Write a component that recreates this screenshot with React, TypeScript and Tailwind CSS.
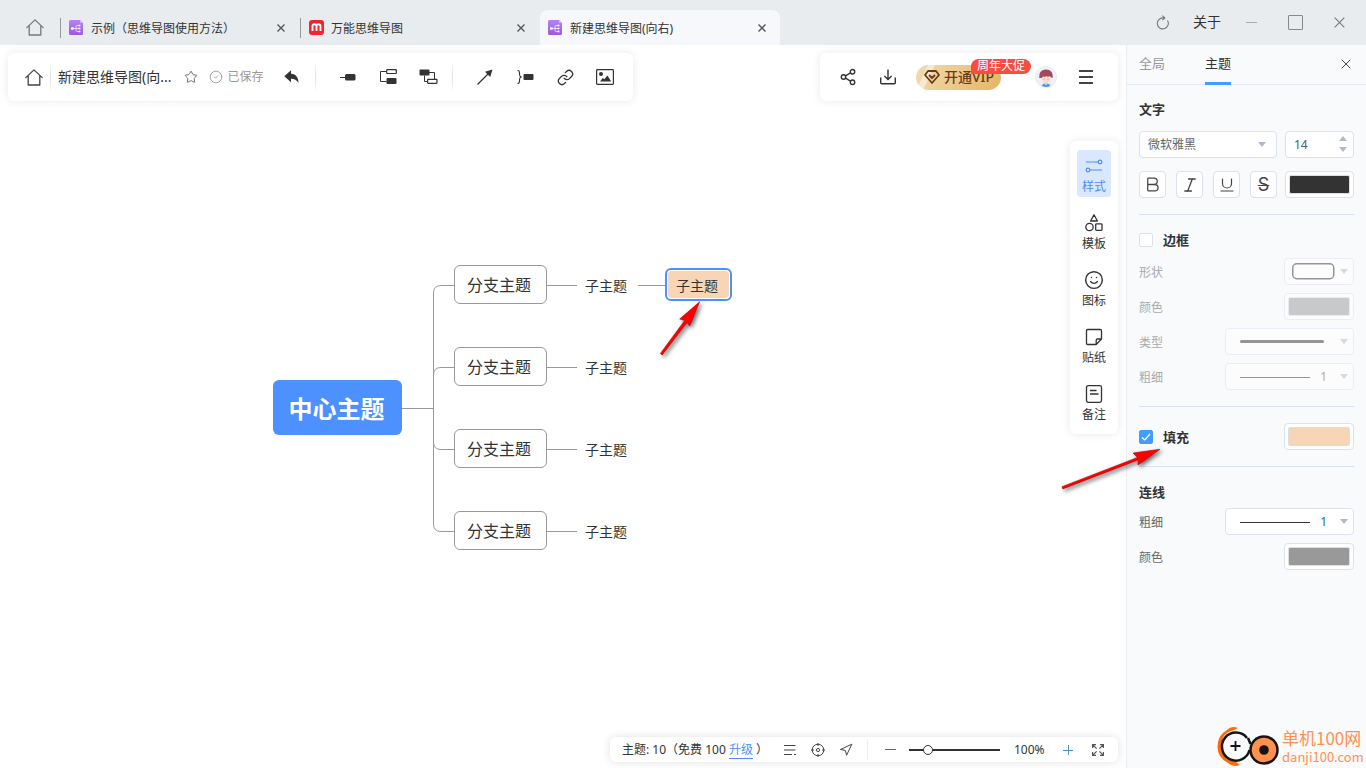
import React, { useState } from "react";
import {
  Bold,
  CircleCheck,
  Italic,
  Link,
  Navigation,
  Share2,
  Smile,
  Star,
  Underline,
} from "lucide-react";

type IconProps = { className?: string };

function HomeIcon({ className = "" }: IconProps) {
  return (
    <svg className={className} width="18" height="17" viewBox="0 0 18 17" fill="none" stroke="currentColor" strokeWidth="1.3" strokeLinejoin="round" strokeLinecap="round">
      <path d="M0.8 8.6 9 0.9l8.2 7.7M3.2 6.8V16h11.6V6.8" />
    </svg>
  );
}

function CloseIcon({ size = 8, className = "" }: IconProps & { size?: number }) {
  return (
    <svg className={className} width={size} height={size} viewBox="0 0 8 8" fill="none" stroke="currentColor" strokeWidth={size > 8 ? 0.8 : 1.4}>
      <path d="M0.5 0.5l7 7M7.5 0.5l-7 7" />
    </svg>
  );
}

function MapFileIcon() {
  return (
    <svg width="15" height="15" viewBox="0 0 15 15">
      <defs>
        <linearGradient id="mapFile" x1="0" y1="0" x2="0" y2="1">
          <stop offset="0" stopColor="#b684f0" />
          <stop offset="1" stopColor="#9d57e6" />
        </linearGradient>
      </defs>
      <path d="M1.5 0H11l3 3v10.5a1.5 1.5 0 0 1-1.5 1.5h-11A1.5 1.5 0 0 1 0 13.5v-12A1.5 1.5 0 0 1 1.5 0Z" fill="url(#mapFile)" />
      <path d="M11 0l3 3h-3z" fill="#d3b4f7" />
      <path d="M4 8.500h3M10.500 5.500H8.200Q7 5.500 7 6.700v3.600q0 1.200 1.200 1.200h2.300M7 8.500h3" stroke="#fff" fill="none" strokeWidth="0.7" />
      <rect x="2" y="7.300" width="2.800" height="2.400" rx="0.700" fill="#fff" />
      <rect x="9.600" y="4.700" width="1.800" height="1.600" fill="#fff" />
      <rect x="9.600" y="7.700" width="1.800" height="1.600" fill="#fff" />
      <rect x="9.600" y="10.700" width="1.800" height="1.600" fill="#fff" />
    </svg>
  );
}

function BrandIcon() {
  return (
    <svg width="15" height="15" viewBox="0 0 15 15">
      <rect width="15" height="15" rx="3" fill="#f5222d" />
      <path d="M3.500 11V6.300a1.900 1.900 0 0 1 4 0V11M7.500 6.300a1.900 1.900 0 0 1 4 0V11" fill="none" stroke="#fff" strokeWidth="1.900" />
    </svg>
  );
}

const tabs = [
  { label: "示例（思维导图使用方法）", brand: false, active: false },
  { label: "万能思维导图", brand: true, active: false },
  { label: "新建思维导图(向右)", brand: false, active: true },
];

function TitleBar() {
  return (
    <header className="flex h-[45px] shrink-0 items-end bg-[#e8ecef] text-[#333]">
      <button aria-label="首页" className="flex h-9 w-[60px] items-center justify-center pl-2.5 text-[#777]">
        <HomeIcon />
      </button>
      <nav className="flex min-w-0 flex-1">
        {tabs.map((tab) => (
          <div
            key={tab.label}
            className={
              tab.active
                ? "flex h-[35px] w-60 items-center rounded-t-lg bg-[#f6f8fb] pr-2.5"
                : "flex h-[35px] w-60 items-center pr-[11px]"
            }
          >
            <span className={tab.active ? "h-5" : "h-5 w-px bg-[#999]"} />
            <button className="flex flex-1 items-center gap-[7px] pl-2 text-left text-xs whitespace-nowrap">
              {tab.brand ? <BrandIcon /> : <MapFileIcon />}
              <span className="pt-0.5">{tab.label}</span>
            </button>
            <button aria-label={`关闭 ${tab.label}`} className="flex size-4 items-center justify-center text-[#555]">
              <CloseIcon />
            </button>
          </div>
        ))}
      </nav>
      <div className="flex h-[45px] items-center">
        <button aria-label="刷新" className="flex w-8 justify-center text-[#777]">
          <svg width="14" height="15" viewBox="0 0 14 15" fill="none" stroke="currentColor" strokeWidth="1.1">
            <path d="M8.500 2.900H7A5.500 5.500 0 1 0 11.500 5.500M6.300 0.600l2.600 2.300-2.600 2.300" />
          </svg>
        </button>
        <button className="ml-3.5 pb-0.5 text-sm leading-5">关于</button>
        <button aria-label="最小化" className="ml-2 flex w-11 justify-center"><span className="h-px w-[11px] bg-[#aaa]" /></button>
        <button aria-label="最大化" className="flex w-11 justify-center"><span className="size-[15px] rounded-[1px] border border-[#888]" /></button>
        <button aria-label="关闭" className="mr-1 flex w-[45px] justify-center text-[#777]"><CloseIcon size={11} /></button>
      </div>
    </header>
  );
}

const Divider = () => <span className="h-8 w-px bg-gradient-to-b from-white via-[#dedede] to-white" />;

const toolIcon = {
  node: (
    <svg width="16" height="18" viewBox="0 0 16 18">
      <path d="M0 9.500h6" stroke="#333" />
      <rect x="5" y="6" width="10.500" height="6.500" rx="1.500" fill="#333" />
    </svg>
  ),
  child: (
    <svg width="17" height="16" viewBox="0 0 17 16" fill="none" stroke="#333">
      <path d="M6.500 2.500h-6v10h6" />
      <rect x="6.700" y="0.700" width="9.600" height="3.800" rx="0.500" strokeWidth="1.2" />
      <rect x="6.500" y="9" width="10" height="6" rx="1" fill="#333" stroke="none" />
    </svg>
  ),
  relation: (
    <svg width="19" height="16" viewBox="0 0 19 16" fill="none" stroke="#333">
      <rect x="0.500" y="0.500" width="10" height="6" rx="1" fill="#333" stroke="none" />
      <path d="M10 3.500h5.500v7M8.500 12.500h-3V6.500" />
      <rect x="8.600" y="10.300" width="9.400" height="4" rx="0.500" strokeWidth="1.2" />
    </svg>
  ),
  arrow: (
    <svg width="16" height="16" viewBox="0 0 16 16">
      <path d="M0.500 15.500 11 5" stroke="#333" strokeWidth="1.3" />
      <path d="M15.500 0.500 13.200 8 8 2.800z" fill="#333" />
    </svg>
  ),
  summary: (
    <svg width="17" height="14" viewBox="0 0 17 14">
      <path d="M0.500 0.500q2 0 2 2v2q0 2 2 2.500-2 0.500-2 2.500v2q0 2-2 2" fill="none" stroke="#333" strokeWidth="1.1" />
      <rect x="6.500" y="4" width="10" height="6" rx="1" fill="#333" />
    </svg>
  ),
  image: (
    <svg width="18" height="16" viewBox="0 0 18 16">
      <rect x="0.600" y="0.600" width="16.800" height="14.800" rx="0.800" fill="none" stroke="#333" strokeWidth="1.2" />
      <circle cx="5" cy="5" r="2" fill="#333" />
      <path d="M4 12.500 6.800 9l1.600 1.300 3-3.800 3.800 6z" fill="#333" />
    </svg>
  ),
};

function Tool({ label, children }: { label: string; children: React.ReactNode }) {
  return (
    <button aria-label={label} className="flex h-8 w-10 items-center justify-center text-[#333]">
      {children}
    </button>
  );
}

function EditToolbar() {
  return (
    <div className="flex h-12 items-center rounded-md bg-white pr-2 shadow-[0_0_10px_rgba(0,0,0,0.09)]">
      <button aria-label="主页" className="flex w-[42px] justify-center pl-2.5 text-[#444]">
        <HomeIcon />
      </button>
      <Divider />
      <span className="ml-[7px] text-sm leading-5 whitespace-nowrap">新建思维导图(向...</span>
      <button aria-label="收藏" className="ml-3 flex w-4 justify-center text-[#666]"><Star size={14} strokeWidth={1.6} /></button>
      <span className="ml-2.5 flex items-center gap-1 text-xs whitespace-nowrap text-[#999]">
        <CircleCheck size={14} strokeWidth={1.5} />
        已保存
      </span>
      <button aria-label="撤销" className="mr-1 ml-2 flex w-10 justify-center">
        <svg width="15" height="14" viewBox="0 0 15 14">
          <path d="M0.300 6.200 7 0.300v3.500c5 0.200 7.500 4 7.500 9C12.500 9.800 10.500 8.700 7 8.700v3.500z" fill="#333" />
        </svg>
      </button>
      <Divider />
      <div className="flex pr-1 pl-3">
        <Tool label="主题">{toolIcon.node}</Tool>
        <Tool label="子主题">{toolIcon.child}</Tool>
        <Tool label="关系">{toolIcon.relation}</Tool>
      </div>
      <Divider />
      <div className="flex pl-3">
        <Tool label="箭头">{toolIcon.arrow}</Tool>
        <Tool label="概要">{toolIcon.summary}</Tool>
        <Tool label="链接"><Link size={17} strokeWidth={1.8} /></Tool>
        <Tool label="图片">{toolIcon.image}</Tool>
      </div>
    </div>
  );
}

function AccountToolbar() {
  return (
    <div className="flex h-12 w-[298px] items-center rounded-md bg-white pl-2 shadow-[0_0_10px_rgba(0,0,0,0.09)]">
      <Tool label="分享"><Share2 size={18} strokeWidth={1.8} /></Tool>
      <Tool label="下载">
        <svg width="16" height="16" viewBox="0 0 16 16" fill="none" stroke="currentColor" strokeWidth="1.4">
          <path d="M0.700 8.500v5.300q0 1 1 1h12.600q1 0 1-1V8.500M8 0.500v9.800M4.400 7 8 10.500 11.600 7" />
        </svg>
      </Tool>
      <button className="relative ml-2 flex h-[25px] w-[85px] items-center gap-1 rounded-full bg-[linear-gradient(115deg,#f0d8ae_0%,#f0d8ae_12%,#f8ead0_13%,#f8ead0_19%,#f0d3a0_20%,#e5b566_100%)] pl-2 text-sm leading-5 font-medium whitespace-nowrap text-[#6b3a16]">
        <svg width="16" height="14" viewBox="0 0 16 14" fill="none" stroke="currentColor" strokeWidth="1.8" strokeLinejoin="round">
          <path d="M4 1h8l3 4-7 8-7-8zM5 5l3 3 3-3" />
        </svg>
        开通VIP
        <span className="absolute -top-1.5 left-[55px] flex h-[15px] w-[60px] items-center justify-center rounded-l-lg rounded-tr-lg rounded-br-lg rounded-bl-none bg-[#f64c42] text-xs leading-none font-normal text-white">
          周年大促
        </span>
      </button>
      <button aria-label="用户" className="ml-[34px] size-[22px]">
        <svg width="22" height="22" viewBox="0 0 22 22">
          <circle cx="11" cy="11" r="10.500" fill="#edf2fa" stroke="#e9ecf2" />
          <path d="M7 20q0-2.700 4-2.700t4 2.700q-4 1.800-8 0z" fill="#3f9bf5" />
          <path d="M9.500 15h3v3l-1.500 1.200L9.500 18z" fill="#f9cdb5" />
          <ellipse cx="11" cy="12.500" rx="4.800" ry="4.300" fill="#fddcc9" />
          <path d="M4.200 12Q3.500 4 10.500 3.500q8-0.300 7.300 8.500l-2-0.700-1.300-1.400-1.500 1-1.500-1-2 1.200-1.300-0.800-1.500 1.700z" fill="#a04a5c" />
          <circle cx="9" cy="13" r="0.400" fill="#633" />
          <circle cx="13" cy="13" r="0.400" fill="#633" />
        </svg>
      </button>
      <button aria-label="菜单" className="ml-[22px] flex w-3.5 flex-col gap-1">
        <span className="h-0.5 bg-[#444]" />
        <span className="h-0.5 bg-[#444]" />
        <span className="h-0.5 bg-[#444]" />
      </button>
    </div>
  );
}

const sideItems = [
  {
    label: "样式",
    icon: (
      <svg width="18" height="18" viewBox="0 0 18 18" fill="none" stroke="currentColor" strokeWidth="1.2">
        <path d="M1 5h12M5 13h12" />
        <circle cx="15" cy="5" r="1.800" />
        <circle cx="3" cy="13" r="1.800" />
      </svg>
    ),
  },
  {
    label: "模板",
    icon: (
      <svg width="18" height="18" viewBox="0 0 18 18" fill="none" stroke="currentColor" strokeWidth="1.3" strokeLinejoin="round">
        <path d="M9 0.800 12.400 7H5.600z" />
        <circle cx="4.500" cy="13" r="3.700" />
        <rect x="10.700" y="9.800" width="6.300" height="6.600" rx="0.800" />
      </svg>
    ),
  },
  { label: "图标", icon: <Smile size={20} strokeWidth={1.7} /> },
  {
    label: "贴纸",
    icon: (
      <svg width="18" height="18" viewBox="0 0 18 18" fill="none" stroke="currentColor" strokeWidth="1.3" strokeLinejoin="round">
        <path d="M2.700 1.500h12.600q1.200 0 1.200 1.200V11l-5.300 5.500H2.700q-1.200 0-1.200-1.200V2.700q0-1.200 1.200-1.200zM16.500 11h-4q-1.300 0-1.300 1.300v4.200" />
      </svg>
    ),
  },
  {
    label: "备注",
    icon: (
      <svg width="18" height="18" viewBox="0 0 18 18" fill="none" stroke="currentColor" strokeWidth="1.3">
        <rect x="1.500" y="0.700" width="15" height="16.600" rx="1.800" />
        <path d="M5 5.500h6.500M5 9h8.500" />
      </svg>
    ),
  },
];

function SideDock() {
  return (
    <nav className="flex w-12 flex-col gap-2.5 rounded-md bg-white px-[7px] py-[9px] shadow-[0_0_10px_rgba(0,0,0,0.09)]">
      {sideItems.map((item, i) => (
        <button
          key={item.label}
          className={
            i === 0
              ? "flex h-[47px] flex-col items-center rounded-sm bg-[#d9e8ff] pt-1 text-[#4d8dfb]"
              : "flex h-[47px] flex-col items-center rounded-sm pt-1 text-[#333]"
          }
        >
          <span className="flex h-6 items-center">{item.icon}</span>
          <span className="text-xs leading-5">{item.label}</span>
        </button>
      ))}
    </nav>
  );
}

function StatusBar() {
  const [zoom, setZoom] = useState(17);
  return (
    <footer className="flex h-[25px] items-center rounded-md bg-white pl-3 text-xs text-[#333] shadow-[0_0_10px_rgba(0,0,0,0.12)]">
      <span className="w-[154px] whitespace-pre">主题: 10（免费 100 <a href="#upgrade" className="border-b border-[#4d8dfb] text-[#4d8dfb]">升级</a> ）</span>
      <button aria-label="大纲" className="flex w-7 justify-center">
        <svg width="12" height="12" viewBox="0 0 12 12" stroke="#444" strokeWidth="1.2">
          <path d="M0 1.500h11.500M0 6h11.500M0 10.500h8M10 10.500h2" />
        </svg>
      </button>
      <button aria-label="定位" className="flex w-7 justify-center">
        <svg width="14" height="14" viewBox="0 0 14 14" fill="none" stroke="#444">
          <circle cx="7" cy="7" r="5.800" />
          <circle cx="7" cy="7" r="1.600" />
          <path d="M7 0v3M7 11v3M0 7h3M11 7h3" />
        </svg>
      </button>
      <button aria-label="导航" className="flex w-7 justify-center text-[#444]"><Navigation size={14} strokeWidth={1.7} /></button>
      <span className="ml-[7px] h-5 w-px bg-[#eee]" />
      <button aria-label="缩小" className="ml-2 flex w-7 justify-center"><span className="h-px w-[11px] bg-[#666]" /></button>
      <input
        type="range"
        aria-label="缩放"
        value={zoom}
        onChange={(e) => setZoom(Number(e.target.value))}
        className="ml-[5px] h-2.5 w-[91px] appearance-none bg-[linear-gradient(#333,#333)] bg-[length:100%_2px] bg-center bg-no-repeat [&::-webkit-slider-thumb]:size-2.5 [&::-webkit-slider-thumb]:appearance-none [&::-webkit-slider-thumb]:rounded-full [&::-webkit-slider-thumb]:border [&::-webkit-slider-thumb]:border-[#333] [&::-webkit-slider-thumb]:bg-white"
      />
      <span className="ml-3.5 w-9">100%</span>
      <button aria-label="放大" className="ml-1 flex w-7 justify-center text-[#4b90d0]">
        <svg width="10" height="10" viewBox="0 0 10 10" stroke="currentColor"><path d="M0 5.500h10M5.500 0v10" /></svg>
      </button>
      <button aria-label="全屏" className="mr-1.5 ml-0.5 flex w-7 justify-center">
        <svg width="12" height="12" viewBox="0 0 12 12" fill="none" stroke="#555" strokeWidth="1.2">
          <path d="M0.600 4V0.600H4M0.600 0.600l4 4M8 0.600h3.400V4M11.400 0.600l-4 4M0.600 8v3.400H4M0.600 11.400l4-4M8 11.400h3.400V8M11.400 11.400l-4-4" />
        </svg>
      </button>
    </footer>
  );
}

const branchTops = ["top-[220px]", "top-[302px]", "top-[384px]", "top-[466px]"];
const leafTops = ["top-[231px]", "top-[313px]", "top-[395px]", "top-[477px]"];

function MindMap() {
  return (
    <div className="absolute inset-0 overflow-hidden">
      <svg className="absolute top-0 left-0" width="760" height="560" fill="none" stroke="#999">
        <path d="M402 363.500h31.500M454 240.500h-13q-7.500 0-7.500 7.500v231q0 7.500 7.500 7.500h13M454 322.500h-13q-7.500 0-7.500 7.500M454 404.500h-13q-7.500 0-7.500-7.500" />
        <path d="M547 240.500h30M547 322.500h30M547 404.500h30M547 486.500h30M638 240.500h29" />
      </svg>
      <div className="absolute top-[335px] left-[273px] flex h-[55px] w-[129px] items-center justify-center rounded-md bg-[#4d90ff] pt-0.5 pr-0.5 text-2xl leading-8 font-bold text-white">
        中心主题
      </div>
      {branchTops.map((top) => (
        <div key={top} className={`absolute left-[454px] flex h-[39px] w-[93px] items-center rounded-md border border-[#999] bg-white pl-3 text-base leading-6 text-[#333] ${top}`}>
          分支主题
        </div>
      ))}
      {leafTops.map((top) => (
        <div key={top} className={`absolute left-[585px] text-sm leading-5 text-[#333] ${top}`}>
          子主题
        </div>
      ))}
      <div className="absolute top-[223px] left-[665px] flex h-[33px] w-[67px] rounded-md border-2 border-[#4d90ff] bg-white p-px">
        <div className="flex flex-1 items-center rounded bg-[#f8d5b5] pt-0.5 pl-2 text-sm leading-5 text-[#333]">子主题</div>
      </div>
      <svg className="absolute top-[250px] left-[655px] drop-shadow-[2px_2px_2px_rgba(0,0,0,0.6)]" width="55" height="65" viewBox="655 295 55 65">
        <path d="M699.700 301.700 679.700 319l5 1.500-24.300 33 1.800 1.500 25-32.500 2.400 3.400z" fill="#f00" stroke="#b00" strokeWidth="0.6" />
      </svg>
    </div>
  );
}

const Caret = () => (
  <svg className="pointer-events-none absolute top-1/2 right-1.5 -mt-[3px]" width="8" height="5" viewBox="0 0 8 5"><path d="M0 0h8L4 5z" fill="#b3b9c9" /></svg>
);

const colorInput =
  "h-[27px] w-[70px] appearance-none rounded border border-[#dce1ef] bg-white p-[3px] disabled:opacity-50 [&::-webkit-color-swatch-wrapper]:p-0 [&::-webkit-color-swatch]:rounded-[2px] [&::-webkit-color-swatch]:border [&::-webkit-color-swatch]:border-[#d9deea]";

function Row({ id, label, disabled, children }: { id: string; label: string; disabled?: boolean; children: React.ReactNode }) {
  return (
    <div className="flex h-[27px] items-center justify-between">
      <label htmlFor={id} className={disabled ? "pt-0.5 text-xs text-[#aaa]" : "pt-0.5 text-xs text-[#666]"}>{label}</label>
      {children}
    </div>
  );
}

function LineSelect({ id, kind, disabled }: { id: string; kind: "shape" | "type" | "width"; disabled?: boolean }) {
  return (
    <div className={`relative h-[27px] ${kind === "shape" ? "w-[70px]" : "w-[129px]"} ${disabled ? "opacity-50" : ""}`}>
      <select
        id={id}
        disabled={disabled}
        className={
          kind === "width"
            ? "size-full appearance-none rounded border border-[#dce1ef] bg-white pr-[26px] text-right text-xs text-[#236a9c] [text-align-last:right] disabled:text-[#555] disabled:opacity-100"
            : "size-full appearance-none rounded border border-[#dce1ef] bg-white text-transparent disabled:opacity-100"
        }
      >
        <option>{kind === "width" ? "1" : ""}</option>
      </select>
      {kind === "shape" && (
        <svg className="pointer-events-none absolute top-[5px] left-2" width="43" height="17"><rect x="0.750" y="0.750" width="41" height="15" rx="4" fill="none" stroke="#333" strokeWidth="1.5" /></svg>
      )}
      {kind === "type" && <span className="pointer-events-none absolute top-3 left-[15px] h-[3px] w-[84px] rounded bg-[#333]" />}
      {kind === "width" && <span className="pointer-events-none absolute top-[14px] left-[15px] h-px w-[70px] bg-[#333]" />}
      <Caret />
    </div>
  );
}

const formatButtons = [
  { label: "加粗", icon: <Bold size={19} strokeWidth={1.6} /> },
  { label: "斜体", icon: <Italic size={18} strokeWidth={1.7} /> },
  { label: "下划线", icon: <Underline size={18} strokeWidth={1.6} /> },
  { label: "删除线", icon: <span className="font-['Inter'] text-lg leading-none line-through decoration-1">S</span> },
];

const Rule = () => <hr className="border-[#dae1ee]" />;

function StylePanel() {
  const [border, setBorder] = useState(false);
  const [fill, setFill] = useState(true);
  const [textColor, setTextColor] = useState("#333333");
  const [fillColor, setFillColor] = useState("#f8d5b5");
  const [lineColor, setLineColor] = useState("#999999");
  const [size, setSize] = useState(14);
  return (
    <aside className="relative w-60 shrink-0 border-l border-[#ebedf1] bg-[#f9fafc] text-[13px] leading-5 text-[#333]">
      <div className="flex h-10 border-b border-[#e3e7f0] px-3">
        <button className="h-10 border-b-3 border-transparent pb-px text-[#999]">全局</button>
        <button className="ml-10 h-10 border-b-3 border-[#409eff] pb-px">主题</button>
        <button aria-label="关闭面板" className="ml-auto flex h-[38px] w-4 items-center justify-center text-[#444]"><CloseIcon size={10} /></button>
      </div>

      <div className="px-3">
        <section className="pt-3.5 pb-4">
          <h2 className="font-bold">文字</h2>
          <div className="mt-3 flex gap-2">
            <div className="relative h-[27px] min-w-0 flex-1">
              <select aria-label="字体" className="size-full appearance-none rounded border border-[#dce1ef] bg-white px-2 text-xs text-[#666]">
                <option>微软雅黑</option>
              </select>
              <svg className="pointer-events-none absolute top-[11px] right-[11px]" width="8" height="5" viewBox="0 0 8 5"><path d="M0 0h8L4 5z" fill="#b3b9c9" /></svg>
            </div>
            <div className="relative h-[27px] w-[69px]">
              <input
                type="number"
                aria-label="字号"
                value={size}
                onChange={(e) => setSize(Number(e.target.value))}
                className="size-full appearance-none rounded border border-[#dce1ef] bg-white pl-2 text-xs text-[#4a6070] [&::-webkit-inner-spin-button]:appearance-none"
              />
              <svg className="pointer-events-none absolute top-[5px] right-[7px]" width="8" height="16" viewBox="0 0 8 16"><path d="M0 5h8L4 0zM0 11h8l-4 5z" fill="#b3b9c9" /></svg>
            </div>
          </div>
          <div className="mt-[13px] flex gap-2">
            <div className="flex min-w-0 flex-1 justify-between">
              {formatButtons.map(({ label, icon }) => (
                <button key={label} aria-label={label} className="flex size-[27px] items-center justify-center rounded border border-[#dce1ef] bg-white text-[#444]">
                  {icon}
                </button>
              ))}
            </div>
            <input type="color" aria-label="文字颜色" value={textColor} onChange={(e) => setTextColor(e.target.value)} className={`${colorInput} max-w-[69px]`} />
          </div>
        </section>
        <Rule />

        <section className="flex flex-col gap-2 pt-[15px] pb-4">
          <label className="flex items-center gap-2.5 font-bold">
            <Check checked={border} onChange={setBorder} />
            边框
          </label>
          <Row id="border-shape" label="形状" disabled><LineSelect id="border-shape" kind="shape" disabled /></Row>
          <Row id="border-color" label="颜色" disabled><input id="border-color" type="color" defaultValue="#999999" disabled className={colorInput} /></Row>
          <Row id="border-type" label="类型" disabled><LineSelect id="border-type" kind="type" disabled /></Row>
          <Row id="border-width" label="粗细" disabled><LineSelect id="border-width" kind="width" disabled /></Row>
        </section>
        <Rule />

        <section className="relative flex items-center justify-between py-4">
          <label className="flex items-center gap-2.5 font-bold">
            <Check checked={fill} onChange={setFill} />
            填充
          </label>
          <input type="color" aria-label="填充颜色" value={fillColor} onChange={(e) => setFillColor(e.target.value)} className={colorInput} />
          <svg className="pointer-events-none absolute top-[38px] -left-[83px] drop-shadow-[2px_2px_2px_rgba(0,0,0,0.6)]" width="110" height="55" viewBox="1056 445 110 55">
            <path d="M1160 449.300 1133 453l4.500 4.500-75.500 29.200 0.800 2.200 75.500-29-0.300 5z" fill="#f00" stroke="#b00" strokeWidth="0.6" />
          </svg>
        </section>
        <Rule />

        <section className="flex flex-col gap-2 pt-[15px]">
          <h2 className="-mb-1 h-[22px] font-bold">连线</h2>
          <Row id="line-width" label="粗细"><LineSelect id="line-width" kind="width" /></Row>
          <Row id="line-color" label="颜色">
            <input id="line-color" type="color" value={lineColor} onChange={(e) => setLineColor(e.target.value)} className={colorInput} />
          </Row>
        </section>
      </div>

      <Watermark />
    </aside>
  );
}

function Check({ checked, onChange }: { checked: boolean; onChange: (v: boolean) => void }) {
  return (
    <span className="relative flex size-3.5">
      <input
        type="checkbox"
        checked={checked}
        onChange={(e) => onChange(e.target.checked)}
        className="size-3.5 appearance-none rounded-[2px] border border-[#dce1ea] bg-white checked:border-[#409eff] checked:bg-[#409eff]"
      />
      {checked && (
        <svg className="pointer-events-none absolute inset-0" width="14" height="14" fill="none" stroke="#fff" strokeWidth="1.2"><path d="M3 7.500 5.800 10 11 4" /></svg>
      )}
    </span>
  );
}

function Watermark() {
  return (
    <div className="absolute right-1 bottom-0 flex items-center gap-0.5 font-['Noto_Sans_CJK_SC',sans-serif] text-[#ff914d]">
      <svg width="64" height="42" viewBox="0 0 64 42" fill="none">
        <path d="M22 2Q15-0.500 11 4 2 9 1.500 20T12 37q5 4.500 12 2L20 36Q6 34 5.500 20.500T17 4.500z" fill="#ff6a0a" />
        <path d="M31 12A14 14 0 1 0 33.500 24" fill="#f9fafc" stroke="#181414" strokeWidth="2.5" />
        <path d="M19.500 15v10M14.500 20h10" stroke="#181414" strokeWidth="1.8" />
        <path d="M32 12l2.500 6M41 12l-5 8" stroke="#181414" strokeWidth="2.5" />
        <circle cx="48" cy="24" r="13.500" fill="#ff914d" stroke="#181414" strokeWidth="2.5" />
        <circle cx="48" cy="24" r="4.800" fill="#181414" />
      </svg>
      <div className="w-20 whitespace-nowrap">
        <div className="text-[17px] leading-5">单机100网</div>
        <div className="text-[13px] leading-[18px]">danji100.com</div>
      </div>
    </div>
  );
}

export default function App() {
  return (
    <div className="flex min-h-screen flex-col bg-white font-['Noto_Sans','Noto_Sans_CJK_SC',sans-serif] text-[#333]">
      <TitleBar />
      <div className="flex flex-1">
        <main className="relative flex min-w-0 flex-1 flex-col">
          <MindMap />
          <div className="relative flex items-start justify-between px-2 pt-2">
            <EditToolbar />
            <AccountToolbar />
          </div>
          <div className="relative mt-10 flex flex-1 items-start justify-end pr-2">
            <SideDock />
          </div>
          <div className="relative flex justify-end pr-2 pb-1.5">
            <StatusBar />
          </div>
        </main>
        <StylePanel />
      </div>
    </div>
  );
}
